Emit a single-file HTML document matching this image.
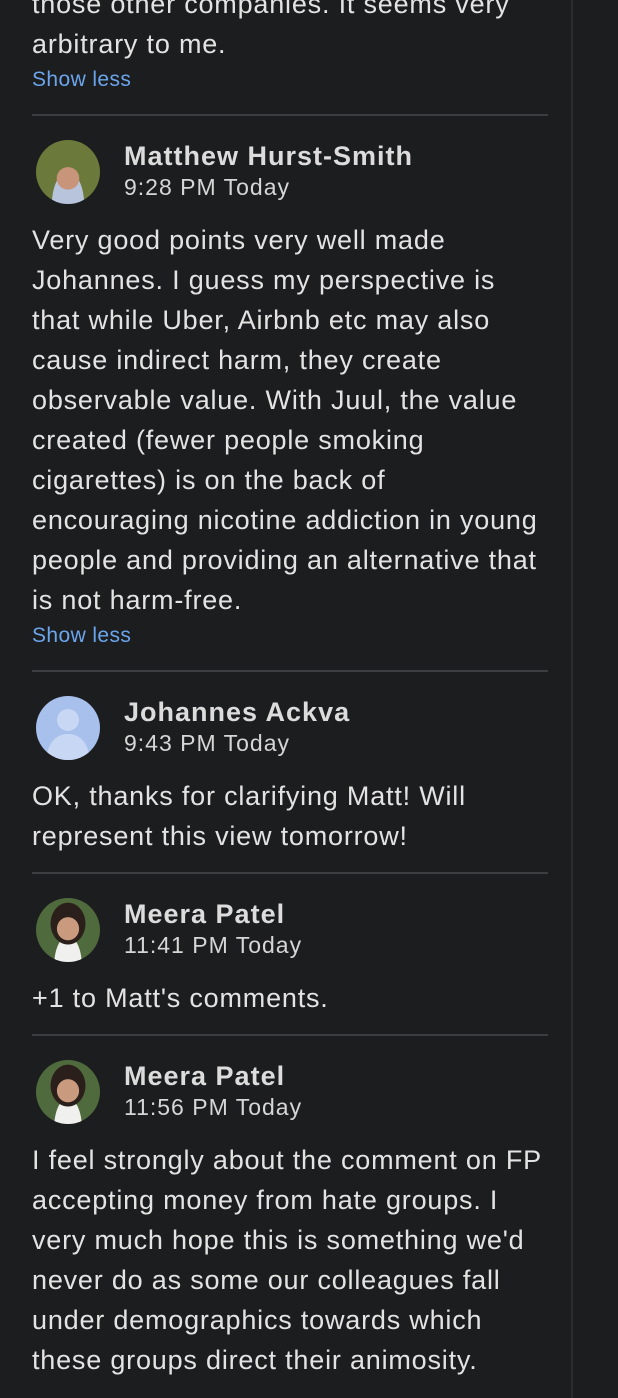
<!DOCTYPE html>
<html><head><meta charset="utf-8"><style>
html,body{margin:0;padding:0;}
body{width:618px;height:1398px;background:#1c1d1f;position:relative;overflow:hidden;font-family:"Liberation Sans",sans-serif;color:#e3e3e3;}
.vl{position:absolute;left:571px;top:0;width:2px;height:1398px;background:#2b2c2e;}
.t{position:absolute;left:32px;font-size:27px;line-height:40px;white-space:nowrap;letter-spacing:0.8px;}
.sl{position:absolute;left:32px;font-size:21px;color:#6ba5ec;line-height:24px;letter-spacing:0.4px;}
.hr{position:absolute;left:32px;width:516px;height:2px;background:#3c3d40;}
.av{position:absolute;left:36px;width:64px;height:64px;border-radius:50%;overflow:hidden;}
.nm{position:absolute;left:124px;font-size:27px;line-height:30px;font-weight:bold;color:#dcdcdc;letter-spacing:1px;}
.tm{position:absolute;left:124px;font-size:23px;line-height:26px;color:#d6d6d6;letter-spacing:1px;}
</style></head><body>
<div class="vl"></div>
<div class="t" style="top:-16px">those other companies. It seems very</div>
<div class="t" style="top:24px">arbitrary to me.</div>
<div class="sl" style="top:68px">Show less</div>
<div class="hr" style="top:114px"></div>

<div class="av" style="top:140px;background:radial-gradient(circle at 50% 60%,#c9957a 0 22%,transparent 23%),radial-gradient(ellipse at 50% 100%,#b8c4dc 0 35%,transparent 36%),#6b7a3a;"></div>
<div class="nm" style="top:141px">Matthew Hurst-Smith</div>
<div class="tm" style="top:174px">9:28 PM Today</div>
<div class="t" style="top:220px">Very good points very well made</div>
<div class="t" style="top:260px">Johannes. I guess my perspective is</div>
<div class="t" style="top:300px">that while Uber, Airbnb etc may also</div>
<div class="t" style="top:340px">cause indirect harm, they create</div>
<div class="t" style="top:380px">observable value. With Juul, the value</div>
<div class="t" style="top:420px">created (fewer people smoking</div>
<div class="t" style="top:460px">cigarettes) is on the back of</div>
<div class="t" style="top:500px">encouraging nicotine addiction in young</div>
<div class="t" style="top:540px">people and providing an alternative that</div>
<div class="t" style="top:580px">is not harm-free.</div>
<div class="sl" style="top:624px">Show less</div>
<div class="hr" style="top:670px"></div>

<div class="av" style="top:696px;background:#a8c0ec;">
<svg width="64" height="64" viewBox="0 0 64 64"><circle cx="32" cy="24" r="11" fill="#c8d7f4"/><path d="M10 64 C12 44 22 38 32 38 C42 38 52 44 54 64Z" fill="#c8d7f4"/></svg></div>
<div class="nm" style="top:697px">Johannes Ackva</div>
<div class="tm" style="top:730px">9:43 PM Today</div>
<div class="t" style="top:776px">OK, thanks for clarifying Matt! Will</div>
<div class="t" style="top:816px">represent this view tomorrow!</div>
<div class="hr" style="top:872px"></div>

<div class="av" style="top:898px;background:radial-gradient(ellipse at 50% 48%,#c99a7e 0 24%,transparent 25%),radial-gradient(ellipse at 50% 40%,#2a1f1a 0 38%,transparent 39%),radial-gradient(ellipse at 50% 105%,#f0f0ee 0 30%,transparent 31%),#4f6a3c;"></div>
<div class="nm" style="top:899px">Meera Patel</div>
<div class="tm" style="top:932px">11:41 PM Today</div>
<div class="t" style="top:978px">+1 to Matt's comments.</div>
<div class="hr" style="top:1034px"></div>

<div class="av" style="top:1060px;background:radial-gradient(ellipse at 50% 48%,#c99a7e 0 24%,transparent 25%),radial-gradient(ellipse at 50% 40%,#2a1f1a 0 38%,transparent 39%),radial-gradient(ellipse at 50% 105%,#f0f0ee 0 30%,transparent 31%),#4f6a3c;"></div>
<div class="nm" style="top:1061px">Meera Patel</div>
<div class="tm" style="top:1094px">11:56 PM Today</div>
<div class="t" style="top:1140px">I feel strongly about the comment on FP</div>
<div class="t" style="top:1180px">accepting money from hate groups. I</div>
<div class="t" style="top:1220px">very much hope this is something we'd</div>
<div class="t" style="top:1260px">never do as some our colleagues fall</div>
<div class="t" style="top:1300px">under demographics towards which</div>
<div class="t" style="top:1340px">these groups direct their animosity.</div>
</body></html>
